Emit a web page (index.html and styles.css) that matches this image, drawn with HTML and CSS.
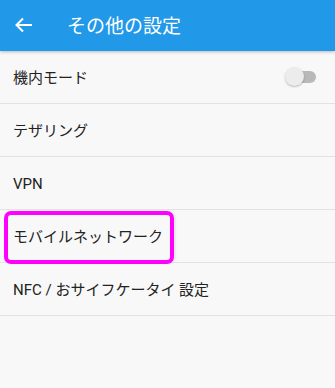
FILE: index.html
```html
<!DOCTYPE html>
<html lang="ja">
<head>
<meta charset="utf-8">
<link rel="stylesheet" href="styles.css">
</head>
<body>
<div class="screen">
  <header class="appbar">
    <svg class="back" width="18" height="16" viewBox="0 0 18 16">
      <path d="M17 8H2M8 1.5L1.5 8L8 14.5" fill="none" stroke="#fff" stroke-width="2"/>
    </svg>
    <h1 class="title">その他の設定</h1>
  </header>
  <ul class="list">
    <li class="row">
      <span class="label">機内モード</span>
      <span class="switch"><span class="track"></span><span class="thumb"></span></span>
    </li>
    <li class="row"><span class="label">テザリング</span></li>
    <li class="row"><span class="label">VPN</span></li>
    <li class="row"><span class="label">モバイルネットワーク</span><span class="highlight"></span></li>
    <li class="row"><span class="label">NFC / おサイフケータイ 設定</span></li>
  </ul>
</div>
</body>
</html>
```

FILE: styles.css
```css
html, body {
  margin: 0;
  padding: 0;
  background: #f8f8f8;
}
.screen {
  width: 335px;
  height: 388px;
  overflow: hidden;
  background: #f8f8f8;
  font-family: "Roboto", "Noto Sans CJK JP", sans-serif;
}
.appbar {
  height: 51px;
  background: #2199e8;
  display: flex;
  align-items: center;
  box-shadow: 0 1px 3px rgba(0,0,0,0.25);
  position: relative;
  z-index: 1;
}
.back {
  margin-left: 15px;
  margin-top: -1px;
}
.title {
  margin: 2px 0 0 34px;
  color: #fff;
  font-size: 19px;
  font-weight: 400;
  line-height: 1;
}
.list {
  list-style: none;
  margin: 0;
  padding: 0;
}
.row {
  height: 52px;
  box-sizing: border-box;
  height: 53px;
  padding-top: 3px;
  border-bottom: 1px solid #e2e2e2;
  display: flex;
  align-items: center;
  padding-left: 13px;
  position: relative;
}
.label {
  font-size: 15px;
  color: #222;
  line-height: 1;
}
.switch {
  position: absolute;
  left: 285px;
  top: 16px;
  width: 32px;
  height: 20px;
}
.track {
  position: absolute;
  left: 8px;
  top: 4px;
  width: 23px;
  height: 12px;
  border-radius: 6px;
  background: #b9b9b9;
}
.thumb {
  position: absolute;
  left: 0;
  top: 0;
  width: 19px;
  height: 19px;
  border-radius: 50%;
  background: #ececec;
  box-shadow: 0 1px 2px rgba(0,0,0,0.25);
}
.highlight {
  position: absolute;
  left: 4px;
  top: 1px;
  width: 162px;
  height: 45px;
  border: 4px solid #ff00ff;
  border-radius: 7px;
  box-shadow: 2px 0 2px rgba(0,0,0,0.06);
}
```
